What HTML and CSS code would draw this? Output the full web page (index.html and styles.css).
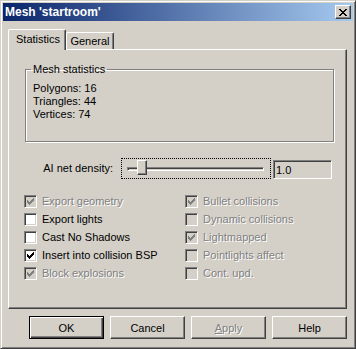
FILE: index.html
```html
<!DOCTYPE html>
<html lang="en">
<head>
<meta charset="UTF-8">
<title>Mesh 'startroom'</title>
<link rel="stylesheet" href="styles.css">
</head>
<body>
<div class="window">
    <div class="titlebar">
        <span class="title">Mesh 'startroom'</span>
        <span class="close">
            <svg width="8" height="7" viewBox="0 0 8 7" shape-rendering="crispEdges"><path fill="#000" d="M0 0h2v1h-2z M6 0h2v1h-2z M1 1h2v1h-2z M5 1h2v1h-2z M2 2h4v1h-4z M3 3h2v1h-2z M2 4h4v1h-4z M1 5h2v1h-2z M5 5h2v1h-2z M0 6h2v1h-2z M6 6h2v1h-2z"/></svg>
        </span>
    </div>

    <div class="content">
        <div class="tabs">
            <div class="tab active">Statistics</div>
            <div class="tab">General</div>
        </div>

        <div class="panel">
            <fieldset class="group">
                <legend>Mesh statistics</legend>
                <div>Polygons: 16</div>
                <div>Triangles: 44</div>
                <div>Vertices: 74</div>
            </fieldset>

            <div class="density">
                <span class="density-label">AI net density:</span>
                <div class="slider">
                    <div class="track"></div>
                    <div class="thumb"></div>
                </div>
                <div class="edit">1.0</div>
            </div>

            <div class="checks">
                <div class="col">
                    <label class="check disabled"><span class="box checked"><svg width="7" height="7" viewBox="0 0 7 7" shape-rendering="crispEdges"><path d="M6 0h1v1h-1z M5 1h2v1h-2z M0 2h1v1h-1z M4 2h3v1h-3z M0 3h2v1h-2z M3 3h3v1h-3z M0 4h5v1h-5z M1 5h3v1h-3z M2 6h1v1h-1z"/></svg></span>Export geometry</label>
                    <label class="check"><span class="box"></span>Export lights</label>
                    <label class="check"><span class="box"></span>Cast No Shadows</label>
                    <label class="check"><span class="box checked"><svg width="7" height="7" viewBox="0 0 7 7" shape-rendering="crispEdges"><path d="M6 0h1v1h-1z M5 1h2v1h-2z M0 2h1v1h-1z M4 2h3v1h-3z M0 3h2v1h-2z M3 3h3v1h-3z M0 4h5v1h-5z M1 5h3v1h-3z M2 6h1v1h-1z"/></svg></span>Insert into collision BSP</label>
                    <label class="check disabled"><span class="box checked"><svg width="7" height="7" viewBox="0 0 7 7" shape-rendering="crispEdges"><path d="M6 0h1v1h-1z M5 1h2v1h-2z M0 2h1v1h-1z M4 2h3v1h-3z M0 3h2v1h-2z M3 3h3v1h-3z M0 4h5v1h-5z M1 5h3v1h-3z M2 6h1v1h-1z"/></svg></span>Block explosions</label>
                </div>
                <div class="col">
                    <label class="check disabled"><span class="box checked"><svg width="7" height="7" viewBox="0 0 7 7" shape-rendering="crispEdges"><path d="M6 0h1v1h-1z M5 1h2v1h-2z M0 2h1v1h-1z M4 2h3v1h-3z M0 3h2v1h-2z M3 3h3v1h-3z M0 4h5v1h-5z M1 5h3v1h-3z M2 6h1v1h-1z"/></svg></span>Bullet collisions</label>
                    <label class="check disabled"><span class="box"></span>Dynamic collisions</label>
                    <label class="check disabled"><span class="box checked"><svg width="7" height="7" viewBox="0 0 7 7" shape-rendering="crispEdges"><path d="M6 0h1v1h-1z M5 1h2v1h-2z M0 2h1v1h-1z M4 2h3v1h-3z M0 3h2v1h-2z M3 3h3v1h-3z M0 4h5v1h-5z M1 5h3v1h-3z M2 6h1v1h-1z"/></svg></span>Lightmapped</label>
                    <label class="check disabled"><span class="box"></span>Pointlights affect</label>
                    <label class="check disabled"><span class="box"></span>Cont. upd.</label>
                </div>
            </div>
        </div>

        <div class="buttons">
            <button class="btn default">OK</button>
            <button class="btn">Cancel</button>
            <button class="btn disabled"><u>A</u>pply</button>
            <button class="btn">Help</button>
        </div>
    </div>
</div>
</body>
</html>
```

FILE: styles.css
```css
body {
    margin: 0;
    background-color: #d4d0c8;
    font-family: "Liberation Sans", Arial, sans-serif;
    font-size: 11px;
    line-height: 13px;
    color: #000;
}

/* classic dialog frame */
.window {
    width: 356px;
    height: 349px;
    box-sizing: border-box;
    border: 1px solid;
    border-color: #d4d0c8 #404040 #404040 #d4d0c8;
    box-shadow: inset 1px 1px #fff, inset -1px -1px #808080;
    padding: 2px;
    display: flex;
    flex-direction: column;
}

.titlebar {
    height: 18px;
    flex: none;
    display: flex;
    align-items: center;
    justify-content: space-between;
    padding: 0 2px;
    background: linear-gradient(to right, #0a246a, #a6caf0);
    color: #fff;
    font-weight: bold;
    font-size: 12px;
}
.close {
    width: 16px;
    height: 14px;
    box-sizing: border-box;
    background-color: #d4d0c8;
    border: 1px solid;
    border-color: #fff #404040 #404040 #fff;
    box-shadow: inset -1px -1px #808080;
    display: flex;
    align-items: center;
    justify-content: center;
}

.content {
    flex: 1;
    display: flex;
    flex-direction: column;
    padding: 8px 6px 6px 5px;
}

/* tabs */
.tabs {
    height: 20px;
    display: flex;
    align-items: flex-end;
}
.tab {
    box-sizing: border-box;
    height: 17px;
    padding-top: 2px;
    text-align: center;
    border: 1px solid;
    border-bottom: none;
    border-color: #fff #404040 #404040 #fff;
    box-shadow: inset -1px 0 #808080;
    border-radius: 2px 2px 0 0;
    background-color: #d4d0c8;
    width: 48px;
}
.tab.active {
    width: 58px;
    height: 21px;
    padding-top: 3px;
    padding-left: 2px;
    margin-bottom: -1px;
    position: relative;
    z-index: 1;
}

.panel {
    height: 260px;
    box-sizing: border-box;
    border: 1px solid;
    border-color: #fff #404040 #404040 #fff;
    box-shadow: inset -1px -1px #808080;
    flex: none;
}

/* group box */
.group {
    box-sizing: border-box;
    width: 309px;
    margin: 13px 0 0 16px;
    padding: 6px 0 20px 7px;
    border: 1px solid #808080;
    box-shadow: 1px 1px #fff, inset 1px 1px #fff;
    min-inline-size: 0;
}
.group legend {
    padding: 0 2px;
    margin-left: -2px;
    line-height: 13px;
}

/* slider row */
.density {
    display: flex;
    align-items: center;
    margin-top: 16px;
    height: 21px;
}
.density-label {
    width: 104px;
    text-align: right;
    margin-right: 8px;
}
.slider {
    width: 150px;
    height: 21px;
    box-sizing: border-box;
    border: 1px dotted #000;
    position: relative;
    display: flex;
    align-items: center;
    padding: 0 6px 0 5px;
}
.track {
    flex: 1;
    height: 4px;
    box-sizing: border-box;
    border: 1px solid;
    border-color: #808080 #fff #fff #808080;
    box-shadow: inset 1px 1px #404040;
}
.thumb {
    position: absolute;
    left: 15px;
    top: 1px;
    width: 10px;
    height: 15px;
    box-sizing: border-box;
    background-color: #d4d0c8;
    border: 1px solid;
    border-color: #fff #404040 #404040 #fff;
    box-shadow: inset -1px -1px #808080;
}
.edit {
    width: 59px;
    height: 19px;
    box-sizing: border-box;
    margin-left: 2px;
    margin-top: 2px;
    padding: 3px 0 0 2px;
    border: 1px solid;
    border-color: #808080 #fff #fff #808080;
    box-shadow: inset 1px 1px #404040, inset -1px -1px #d4d0c8;
}

/* checkboxes */
.checks {
    display: flex;
    padding: 13px 0 0 15px;
}
.col {
    width: 175px;
    display: flex;
    flex-direction: column;
}
.check {
    height: 18px;
    display: flex;
    align-items: center;
}
.box {
    width: 13px;
    height: 13px;
    box-sizing: border-box;
    margin-right: 5px;
    background-color: #fff;
    border: 1px solid;
    border-color: #808080 #fff #fff #808080;
    box-shadow: inset 1px 1px #404040, inset -1px -1px #d4d0c8;
    display: flex;
    align-items: center;
    justify-content: center;
    flex: none;
}
.box svg {
    fill: #000;
}
.disabled {
    color: #808080;
    text-shadow: 1px 1px #fff;
}
.disabled .box {
    background-color: #d4d0c8;
}
.disabled .box svg {
    fill: #808080;
}

/* buttons */
.buttons {
    display: flex;
    justify-content: flex-end;
    gap: 6px;
    margin-top: 7px;
}
.btn {
    width: 75px;
    height: 23px;
    box-sizing: border-box;
    font-family: inherit;
    font-size: 11px;
    color: #000;
    background-color: #d4d0c8;
    border: 1px solid;
    border-color: #fff #404040 #404040 #fff;
    box-shadow: inset -1px -1px #808080;
    padding: 0;
}
.btn.default {
    border-color: #000;
    box-shadow: inset 1px 1px #fff, inset -1px -1px #404040, inset -2px -2px #808080;
}
.btn.disabled {
    color: #808080;
}
```
